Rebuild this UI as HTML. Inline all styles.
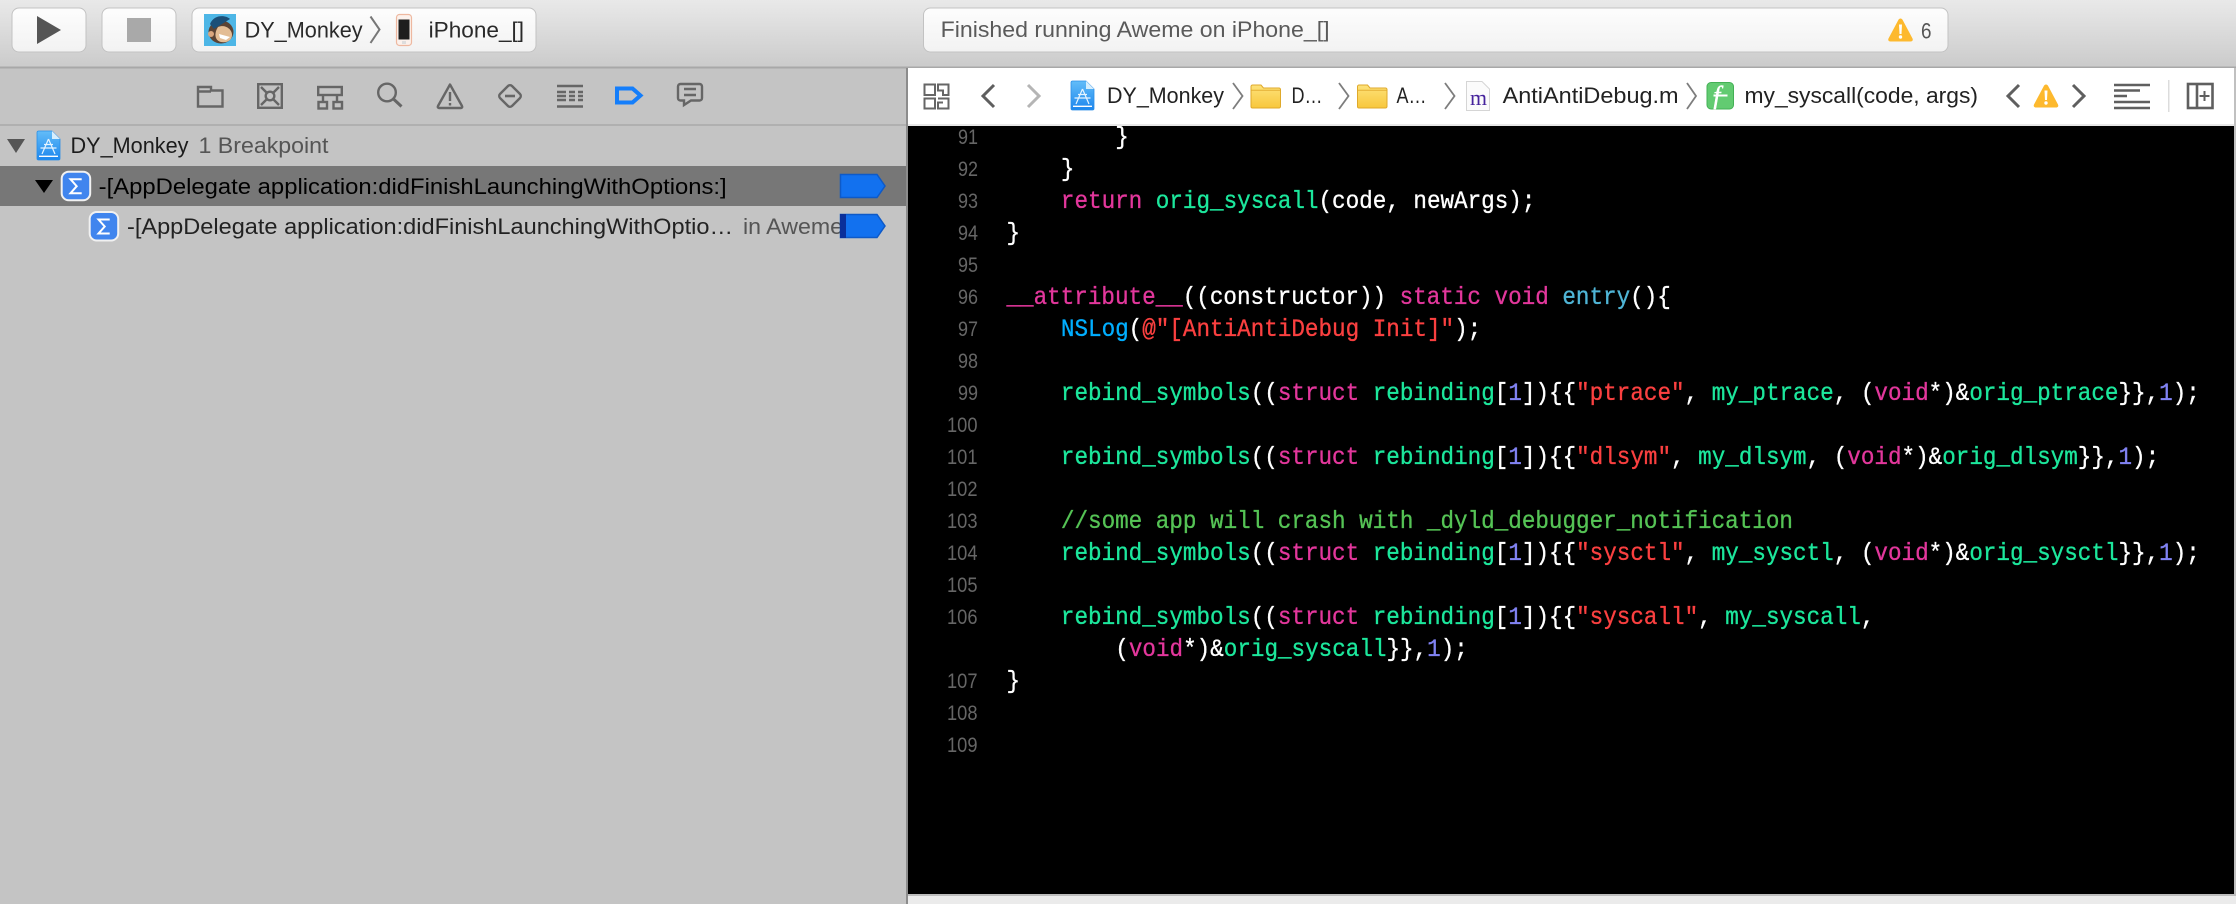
<!DOCTYPE html>
<html><head><meta charset="utf-8"><style>
html,body{margin:0;padding:0;background:#000;width:2236px;height:904px;overflow:hidden}
svg{display:block}
.s{font-family:"Liberation Sans",sans-serif;font-size:22px}
.c{font-family:"Liberation Mono",monospace;font-size:22.6px;fill:#fff;stroke:#fff;stroke-width:.3px;white-space:pre}
.n{font-family:"Liberation Sans",sans-serif;font-size:21.5px;fill:#666}
.k{fill:#e3379c;stroke:#e3379c}.f{fill:#1ce79c;stroke:#1ce79c}.r{fill:#fb4040;stroke:#fb4040}.d{fill:#8082f2;stroke:#8082f2}.b{fill:#00aeff;stroke:#00aeff}.e{fill:#4fb5d6;stroke:#4fb5d6}.g{fill:#55c355;stroke:#55c355}
.ic{fill:none;stroke:#666;stroke-width:2.4}
.sep{fill:none;stroke:#7d7d7d;stroke-width:1.8}
</style></head><body>
<svg width="2236" height="904" viewBox="0 0 2236 904" xmlns="http://www.w3.org/2000/svg">
<defs>
<linearGradient id="tb" x1="0" y1="0" x2="0" y2="1"><stop offset="0" stop-color="#e9e9e9"/><stop offset="1" stop-color="#cbcbcb"/></linearGradient>
<linearGradient id="btn" x1="0" y1="0" x2="0" y2="1"><stop offset="0" stop-color="#fdfdfd"/><stop offset="1" stop-color="#f2f2f2"/></linearGradient>
<linearGradient id="doc" x1="0" y1="0" x2="0" y2="1"><stop offset="0" stop-color="#63bdf8"/><stop offset="1" stop-color="#1c86ee"/></linearGradient>
<linearGradient id="fol" x1="0" y1="0" x2="0" y2="1"><stop offset="0" stop-color="#fde27a"/><stop offset="1" stop-color="#f8c73c"/></linearGradient>
<g id="appdoc">
<path d="M0 1.5A1.5 1.5 0 0 1 1.5 0H15L23 8V27.500A1.500 1.500 0 0 1 21.500 29H1.500A1.500 1.500 0 0 1 0 27.500Z" fill="url(#doc)" stroke="#2b8fe8" stroke-width=".8"/>
<path d="M15 0V8H23Z" fill="#d6eefd"/>
<path d="M11.500 8L5 23M11.500 8L18 23M3.500 17H19.500M7 13.500H16" fill="none" stroke="#e6f4ff" stroke-width="1.200"/>
<path d="M2 25.300H21" stroke="#fff" stroke-width="1.300"/>
</g>
<g id="sig">
<rect x="1" y="1" width="28.500" height="28.500" rx="7" fill="#4085ee" stroke="#f1f1f1" stroke-width="2"/>
<path d="M21 8.500H9.800L16 15.500L9.800 22.500H21" fill="none" stroke="#fff" stroke-width="2"/>
</g>
<g id="warn">
<path d="M12 1.500C13 1.500 13.800 2.200 14.300 3.200L24 21.500C24.800 23.200 23.900 24.500 22 24.500H2C.2 24.500-.8 23.200 0 21.500L9.700 3.200C10.200 2.200 11 1.500 12 1.500Z" fill="#fdb92e"/>
<path d="M10.500 7.500H13.500L13 17H11Z" fill="#fff"/><circle cx="12" cy="20" r="1.700" fill="#fff"/>
</g>
<g id="folder">
<path d="M0 2.500A1.500 1.500 0 0 1 1.500 1H10L12.500 4H28A1.500 1.500 0 0 1 29.500 5.500V22.500A1.500 1.500 0 0 1 28 24H1.500A1.500 1.500 0 0 1 0 22.500Z" fill="url(#fol)" stroke="#dfa92b" stroke-width="1"/>
<path d="M.5 6.300H29" stroke="#e4b034" stroke-width="1"/>
</g>
</defs>

<!-- base -->
<rect width="2236" height="904" fill="#c4c4c4"/>
<rect width="2236" height="67" fill="url(#tb)"/>
<rect y="66.500" width="2236" height="2" fill="#a8a8a8"/>
<rect y="124" width="906" height="2" fill="#b0b0b0"/>

<!-- toolbar buttons -->
<rect x="12" y="8" width="74" height="44" rx="7" fill="url(#btn)" stroke="#c2c2c2"/>
<rect x="102" y="8" width="74" height="44" rx="7" fill="url(#btn)" stroke="#c2c2c2"/>
<rect x="192" y="8" width="344" height="44" rx="7" fill="url(#btn)" stroke="#c2c2c2"/>
<rect x="923.500" y="8" width="1024.500" height="44" rx="7" fill="url(#btn)" stroke="#c2c2c2"/>
<path d="M37 16L61 30L37 44Z" fill="#555"/>
<rect x="127" y="18" width="24" height="24" fill="#a9a9a9"/>

<!-- monkey icon -->
<rect x="204" y="14" width="32" height="32" fill="#4db6e6"/>
<ellipse cx="221" cy="32" rx="12.500" ry="11.500" fill="#5b4334"/>
<path d="M210 24C214 14 226 15 230 19L214 29Z" fill="#1b4f78"/>
<path d="M218 27C225 24 232 29 232 35C232 41 226 43 221 42C216 41 213 35 218 27Z" fill="#e3bd95"/>
<path d="M219 34L230 37L226 40L220 38Z" fill="#fff"/>
<circle cx="211" cy="34" r="3" fill="#d9a67e"/>

<text class="s" x="244.600" y="37.700" fill="#2a2a2a" textLength="118" lengthAdjust="spacingAndGlyphs">DY_Monkey</text>
<path d="M370.500 16.500L379.500 29.500L370.500 43" fill="none" stroke="#777" stroke-width="2"/>
<!-- phone -->
<rect x="396.500" y="14.500" width="15" height="31" rx="3" fill="#fbf1ec" stroke="#eeb8a0" stroke-width="1.200"/>
<rect x="398.500" y="19.500" width="11" height="20" fill="#1e1e1e"/>
<rect x="402" y="41" width="4" height="3" fill="#ddd"/>
<text class="s" x="428.600" y="37.700" fill="#2a2a2a" textLength="95.500" lengthAdjust="spacingAndGlyphs">iPhone_[]</text>

<!-- status -->
<text class="s" x="940.600" y="37" fill="#5a5a5a" textLength="389" lengthAdjust="spacingAndGlyphs">Finished running Aweme on iPhone_[]</text>
<use href="#warn" transform="translate(1888.500,17)"/>
<text class="s" x="1921" y="38.500" fill="#555" textLength="10.500" lengthAdjust="spacingAndGlyphs">6</text>

<!-- navigator icons -->
<path class="ic" d="M198 106.500V87H211V90.500H222.500V106.500ZM198 91.500H211"/>
<g class="ic"><rect x="258.200" y="84.200" width="23.600" height="23.600"/><circle cx="270" cy="96" r="4.300"/><path d="M261 87L266.500 92.500M279 87L273.500 92.500M261 105L266.500 99.500M279 105L273.500 99.500"/></g>
<g class="ic"><rect x="318.200" y="87" width="23.600" height="8"/><rect x="318.500" y="102" width="8.500" height="6.500"/><rect x="333.500" y="102" width="8.500" height="6.500"/><path d="M323 95V102M337 95V102"/></g>
<g class="ic"><circle cx="387" cy="92.500" r="8.800"/><path d="M393.500 99L401.500 106.500" stroke-width="3"/></g>
<g class="ic"><path d="M450 84.500L462 106C462.500 107 462 108 461 108H439C438 108 437.500 107 438 106Z" stroke-linejoin="round"/><path d="M450 92V101M450 103V105.500"/></g>
<g class="ic"><rect x="501.500" y="87.500" width="17" height="17" rx="3" transform="rotate(45 510 96)"/><path d="M505 96H515" stroke-width="2.600"/></g>
<g class="ic" stroke-width="2"><path d="M557 86H583M557 106.500H583" stroke-width="2.400"/><path d="M557 92H566M569 92H575M578 92H583M557 96H566M569 96H575M578 96H583M557 100H566M569 100H575M578 100H583"/></g>
<path d="M617 88.500H632.500L640.500 95.500L632.500 102.500H617Z" fill="none" stroke="#147efb" stroke-width="4"/>
<g class="ic"><path d="M680.500 84H699.500C701 84 702 85 702 86.500V98C702 99.500 701 100.500 699.500 100.500H691L684 105V100.500H680.500C679 100.500 678 99.500 678 98V86.500C678 85 679 84 680.500 84Z"/><path d="M684 89H696M684 95H696"/></g>

<!-- tree -->
<rect y="166" width="906" height="40" fill="#777"/>
<path d="M7 139H25L16 153Z" fill="#555"/>
<use href="#appdoc" transform="translate(37,131)"/>
<text class="s" x="70.500" y="153" fill="#1c1c1c" textLength="118" lengthAdjust="spacingAndGlyphs">DY_Monkey</text>
<text class="s" x="198.500" y="153" fill="#555" textLength="130" lengthAdjust="spacingAndGlyphs">1 Breakpoint</text>
<path d="M35 180H53L44 193Z" fill="#000"/>
<use href="#sig" transform="translate(60.700,170.700)"/>
<text class="s" x="98.700" y="194" fill="#000" textLength="628" lengthAdjust="spacingAndGlyphs">-[AppDelegate application:didFinishLaunchingWithOptions:]</text>
<use href="#sig" transform="translate(88.700,211)"/>
<text class="s" x="127" y="234" fill="#222" textLength="606" lengthAdjust="spacingAndGlyphs">-[AppDelegate application:didFinishLaunchingWithOptio…</text>
<text class="s" x="743" y="234" fill="#555" textLength="100" lengthAdjust="spacingAndGlyphs">in Aweme</text>
<path d="M840.500 174.500H877L885 186L877 197.500H840.500Z" fill="#1271ef" stroke="#0e5ac8" stroke-width="1.500"/>
<path d="M840.500 214.500H877L885 226L877 237.500H840.500Z" fill="#1271ef" stroke="#0e5ac8" stroke-width="1.500"/>
<rect x="840" y="214" width="6" height="24" fill="#0a2f9a"/>
<rect x="906" y="68" width="2" height="836" fill="#8c8c8c"/>

<!-- editor -->
<rect x="908" y="126" width="1326" height="768" fill="#000"/>

<g>
<text class="c" transform="translate(1115.300,144) scale(1,1.120)">}</text>
<text class="c" transform="translate(1060.900,176) scale(1,1.120)">}</text>
<text class="c" transform="translate(1060.900,208) scale(1,1.120)"><tspan class="k">return</tspan> <tspan class="f">orig_syscall</tspan>(code, newArgs);</text>
<text class="c" transform="translate(1006.500,240) scale(1,1.120)">}</text>
<text class="c" transform="translate(1006.500,304) scale(1,1.120)"><tspan class="k">__attribute__</tspan>((constructor)) <tspan class="k">static</tspan> <tspan class="k">void</tspan> <tspan class="e">entry</tspan>(){</text>
<text class="c" transform="translate(1060.900,336) scale(1,1.120)"><tspan class="b">NSLog</tspan>(<tspan class="r">@"[AntiAntiDebug Init]"</tspan>);</text>
<text class="c" transform="translate(1060.900,400) scale(1,1.120)"><tspan class="f">rebind_symbols</tspan>((<tspan class="k">struct</tspan> <tspan class="f">rebinding</tspan>[<tspan class="d">1</tspan>]){{<tspan class="r">"ptrace"</tspan>, <tspan class="f">my_ptrace</tspan>, (<tspan class="k">void</tspan>*)&amp;<tspan class="f">orig_ptrace</tspan>}},<tspan class="d">1</tspan>);</text>
<text class="c" transform="translate(1060.900,464) scale(1,1.120)"><tspan class="f">rebind_symbols</tspan>((<tspan class="k">struct</tspan> <tspan class="f">rebinding</tspan>[<tspan class="d">1</tspan>]){{<tspan class="r">"dlsym"</tspan>, <tspan class="f">my_dlsym</tspan>, (<tspan class="k">void</tspan>*)&amp;<tspan class="f">orig_dlsym</tspan>}},<tspan class="d">1</tspan>);</text>
<text class="c g" transform="translate(1060.900,528) scale(1,1.120)">//some app will crash with _dyld_debugger_notification</text>
<text class="c" transform="translate(1060.900,560) scale(1,1.120)"><tspan class="f">rebind_symbols</tspan>((<tspan class="k">struct</tspan> <tspan class="f">rebinding</tspan>[<tspan class="d">1</tspan>]){{<tspan class="r">"sysctl"</tspan>, <tspan class="f">my_sysctl</tspan>, (<tspan class="k">void</tspan>*)&amp;<tspan class="f">orig_sysctl</tspan>}},<tspan class="d">1</tspan>);</text>
<text class="c" transform="translate(1060.900,624) scale(1,1.120)"><tspan class="f">rebind_symbols</tspan>((<tspan class="k">struct</tspan> <tspan class="f">rebinding</tspan>[<tspan class="d">1</tspan>]){{<tspan class="r">"syscall"</tspan>, <tspan class="f">my_syscall</tspan>,</text>
<text class="c" transform="translate(1115.300,656) scale(1,1.120)">(<tspan class="k">void</tspan>*)&amp;<tspan class="f">orig_syscall</tspan>}},<tspan class="d">1</tspan>);</text>
<text class="c" transform="translate(1006.500,688) scale(1,1.120)">}</text>
</g>

<!-- line numbers -->
<g>
<text class="n" x="958" y="144" textLength="20" lengthAdjust="spacingAndGlyphs">91</text>
<text class="n" x="958" y="176" textLength="20" lengthAdjust="spacingAndGlyphs">92</text>
<text class="n" x="958" y="208" textLength="20" lengthAdjust="spacingAndGlyphs">93</text>
<text class="n" x="958" y="240" textLength="20" lengthAdjust="spacingAndGlyphs">94</text>
<text class="n" x="958" y="272" textLength="20" lengthAdjust="spacingAndGlyphs">95</text>
<text class="n" x="958" y="304" textLength="20" lengthAdjust="spacingAndGlyphs">96</text>
<text class="n" x="958" y="336" textLength="20" lengthAdjust="spacingAndGlyphs">97</text>
<text class="n" x="958" y="368" textLength="20" lengthAdjust="spacingAndGlyphs">98</text>
<text class="n" x="958" y="400" textLength="20" lengthAdjust="spacingAndGlyphs">99</text>
<text class="n" x="947" y="432" textLength="30.500" lengthAdjust="spacingAndGlyphs">100</text>
<text class="n" x="947" y="464" textLength="30.500" lengthAdjust="spacingAndGlyphs">101</text>
<text class="n" x="947" y="496" textLength="30.500" lengthAdjust="spacingAndGlyphs">102</text>
<text class="n" x="947" y="528" textLength="30.500" lengthAdjust="spacingAndGlyphs">103</text>
<text class="n" x="947" y="560" textLength="30.500" lengthAdjust="spacingAndGlyphs">104</text>
<text class="n" x="947" y="592" textLength="30.500" lengthAdjust="spacingAndGlyphs">105</text>
<text class="n" x="947" y="624" textLength="30.500" lengthAdjust="spacingAndGlyphs">106</text>
<text class="n" x="947" y="688" textLength="30.500" lengthAdjust="spacingAndGlyphs">107</text>
<text class="n" x="947" y="720" textLength="30.500" lengthAdjust="spacingAndGlyphs">108</text>
<text class="n" x="947" y="752" textLength="30.500" lengthAdjust="spacingAndGlyphs">109</text>
</g>

<!-- jump bar -->
<rect x="908" y="68" width="1326" height="56" fill="#fff"/>
<rect x="908" y="124" width="1326" height="2" fill="#e8e8e8"/>
<rect x="2234" y="68" width="2" height="836" fill="#c0c0c0"/>
<rect x="908" y="894" width="1328" height="2" fill="#bdbdbd"/>
<rect x="908" y="896" width="1328" height="8" fill="#ebebeb"/>

<g fill="none" stroke="#666" stroke-width="2"><path d="M924.500 84.500H935V95H924.500ZM924.500 98.500H935V108.500H924.500ZM938 84.500H948.500V95H943V90.500H938ZM938 98.500H948.500V108.500H938V102.500H943"/></g>
<path d="M994 85L983 96L994 107" fill="none" stroke="#5f5f5f" stroke-width="3"/>
<path d="M1028 85L1039 96L1028 107" fill="none" stroke="#b5b5b5" stroke-width="3"/>
<use href="#appdoc" transform="translate(1071,81)"/>
<text class="s" x="1107" y="103" fill="#222" textLength="117" lengthAdjust="spacingAndGlyphs">DY_Monkey</text>
<path class="sep" d="M1233 83L1242.500 96L1233 109"/>
<use href="#folder" transform="translate(1251,84)"/>
<text class="s" x="1291.500" y="103" fill="#222" textLength="31" lengthAdjust="spacingAndGlyphs">D…</text>
<path class="sep" d="M1339 83L1348.500 96L1339 109"/>
<use href="#folder" transform="translate(1357.500,84)"/>
<text class="s" x="1396.500" y="103" fill="#222" textLength="30" lengthAdjust="spacingAndGlyphs">A…</text>
<path class="sep" d="M1445 83L1454.500 96L1445 109"/>
<path d="M1466.500 81.500H1482L1489.500 89V110.500H1466.500Z" fill="#fbfbfb" stroke="#d5d5d5"/>
<text x="1470" y="105" font-family="Liberation Serif,serif" font-size="22" fill="#46239c" textLength="17" lengthAdjust="spacingAndGlyphs">m</text>
<text class="s" x="1502.600" y="103" fill="#222" textLength="176" lengthAdjust="spacingAndGlyphs">AntiAntiDebug.m</text>
<path class="sep" d="M1687 83L1696 96L1687 109"/>
<rect x="1707" y="82.500" width="26.500" height="26.500" rx="4" fill="#62cb71" stroke="#43b055"/>
<text x="1713.500" y="103.500" font-family="Liberation Serif,serif" font-style="italic" font-size="25" fill="#fff" stroke="#fff" stroke-width=".5">f</text>
<path d="M1713.500 95.500H1727.500" stroke="#fff" stroke-width="2"/>
<text class="s" x="1744.500" y="103" fill="#222" textLength="233.500" lengthAdjust="spacingAndGlyphs">my_syscall(code, args)</text>
<path d="M2019 85L2008 96L2019 107" fill="none" stroke="#5f5f5f" stroke-width="3"/>
<use href="#warn" transform="translate(2034,83)"/>
<path d="M2073 85L2084 96L2073 107" fill="none" stroke="#5f5f5f" stroke-width="3"/>
<path d="M2114 85H2150M2114 90.500H2140M2114 96H2127M2114 102H2150M2114 108H2150" fill="none" stroke="#5f5f5f" stroke-width="2.400"/>
<rect x="2168" y="80" width="1.500" height="32" fill="#dcdcdc"/>
<g fill="none" stroke="#5f5f5f" stroke-width="2.600"><rect x="2188" y="84" width="24.500" height="24"/><path d="M2197 84V108"/><path d="M2204.500 91V101M2199.500 96H2209.500" stroke-width="2"/></g>
</svg>
</body></html>
